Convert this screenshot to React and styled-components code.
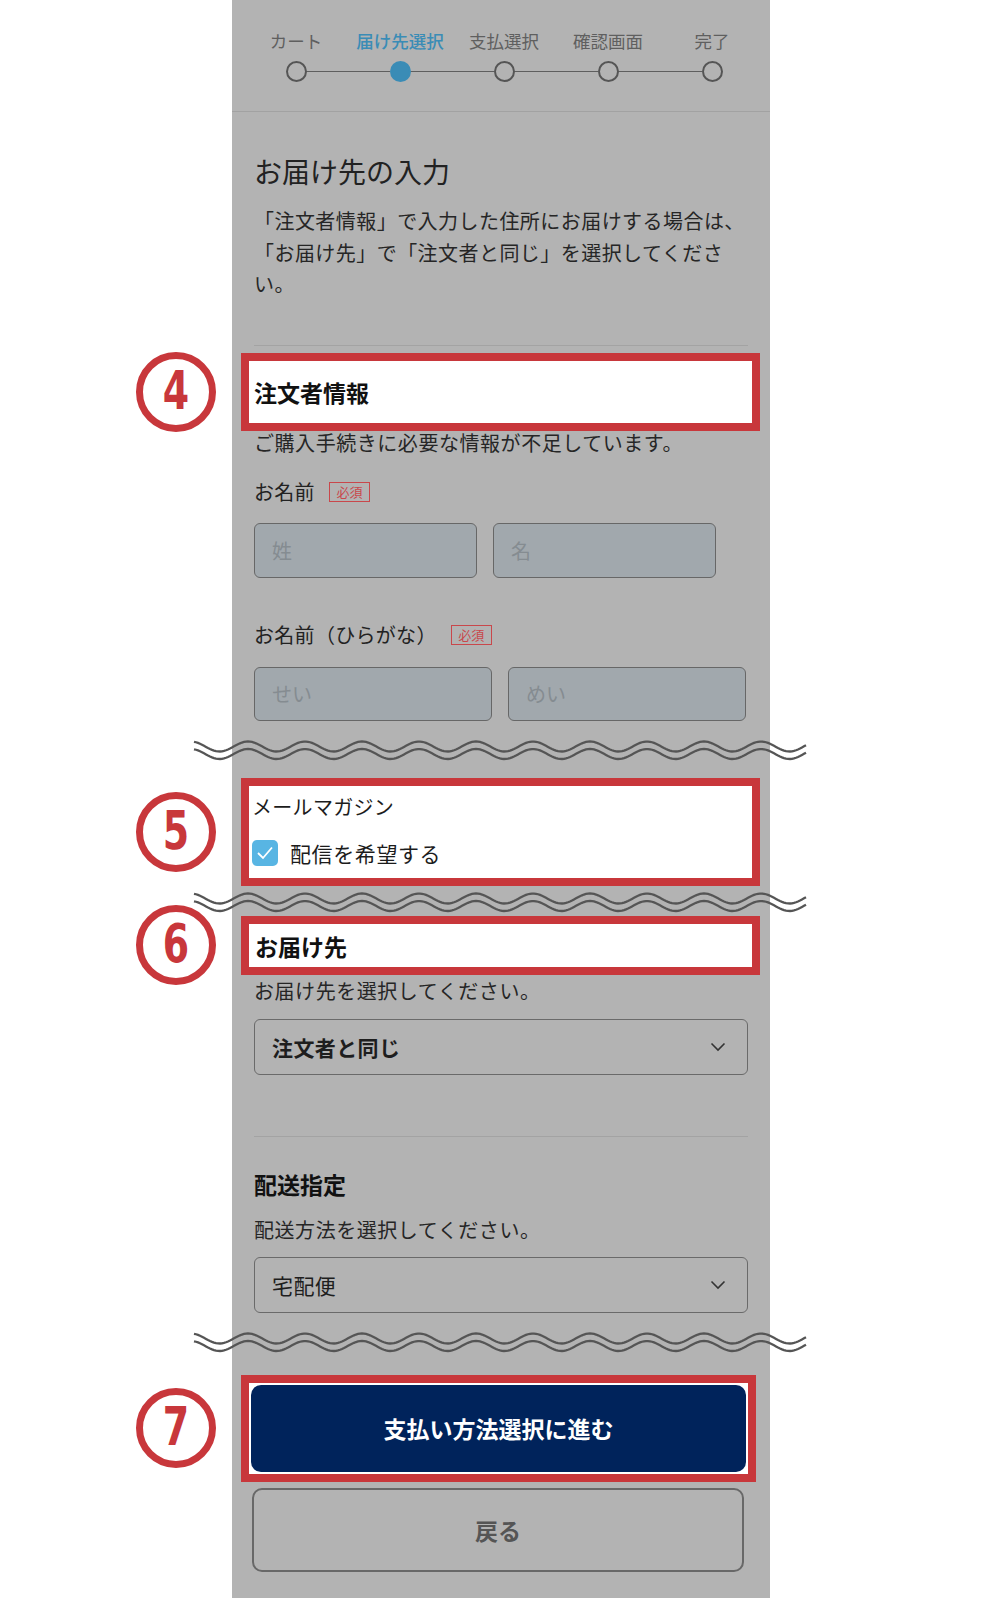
import React from "react";
import styled, { createGlobalStyle } from "styled-components";

const GlobalStyle = createGlobalStyle`
  body {
    margin: 0;
    background: #fff;
    font-family: "Noto Sans CJK JP", "Noto Sans", sans-serif;
    color: #222;
  }
  * { box-sizing: border-box; }
`;

const RED = "#c8373b";

const Page = styled.div`
  padding-left: 232px;
  padding-bottom: 2px;
`;

const Panel = styled.div`
  width: 538px;
  background: #b3b3b3;
  padding-bottom: 26px;
`;

const Stepper = styled.div`
  display: grid;
  grid-template-columns: repeat(5, 104px);
  padding: 29px 0 0 12px;
  height: 112px;
  border-bottom: 1px solid #a2a2a2;
`;

const Step = styled.div`
  position: relative;
  display: flex;
  flex-direction: column;
  align-items: center;
  gap: 8px;

  &:not(:last-child)::after {
    content: "";
    position: absolute;
    top: 41.5px;
    left: calc(50% + 10px);
    width: 84px;
    height: 1.5px;
    background: #5e5e5e;
  }
`;

const StepLabel = styled.span`
  font-size: 17.5px;
  line-height: 24px;
  color: ${({ active }) => (active ? "#3a8cb6" : "#5f5f5f")};
  font-weight: ${({ active }) => (active ? 500 : 400)};
  white-space: nowrap;
`;

const StepDot = styled.span`
  width: 21px;
  height: 21px;
  border-radius: 50%;
  border: 2px solid ${({ active }) => (active ? "#3a8cb6" : "#555")};
  background: ${({ active }) => (active ? "#3a8cb6" : "#b3b3b3")};
  position: relative;
  z-index: 1;
`;

const Body = styled.div`
  padding: 0 22px;
`;

const Title = styled.h1`
  margin: 41px 0 0;
  font-size: 28px;
  line-height: 36px;
  font-weight: 400;
  color: #222;
`;

const Lead = styled.p`
  margin: 16px 0 0;
  font-size: 20px;
  line-height: 31.5px;
  letter-spacing: 0.45px;
  color: #262626;
`;

const Divider = styled.hr`
  margin: ${({ top }) => top}px 0 0;
  border: none;
  height: 1px;
  background: #a3a3a3;
`;

const Highlight = styled.section`
  position: relative;
  margin: ${({ top }) => top}px ${({ right = 12 }) => -right}px 0 -13px;
  border: 8px solid ${RED};
  background: #fff;
  padding: ${({ pad }) => pad};
`;

const Callout = styled.span`
  position: absolute;
  left: -113px;
  top: 50%;
  transform: translateY(-50%);
  width: 80px;
  height: 80px;
  border-radius: 50%;
  border: 7px solid ${RED};
  background: #fff;
  display: flex;
  align-items: center;
  justify-content: center;
  color: ${RED};
  font-family: "DejaVu Sans Condensed", "DejaVu Sans", sans-serif;
  font-weight: 700;
  font-size: 54px;
  line-height: 1;

  span {
    display: inline-block;
    transform: scaleX(0.78);
    margin-top: -2px;
  }
`;

const SectionHeading = styled.h2`
  margin: 0;
  font-size: 23px;
  line-height: ${({ lh = 30 }) => lh}px;
  font-weight: 700;
  color: #111;
`;

const Note = styled.p`
  margin: ${({ top }) => top}px 0 0;
  font-size: 20px;
  line-height: 24px;
  letter-spacing: 0.55px;
  color: #262626;
`;

const FieldLabel = styled.div`
  margin-top: ${({ top }) => top}px;
  display: flex;
  align-items: center;
  gap: 14px;
  font-size: 20px;
  line-height: 24px;
  letter-spacing: 0.3px;
  color: #222;
`;

const Required = styled.span`
  display: inline-flex;
  align-items: center;
  justify-content: center;
  width: 41px;
  height: 20px;
  border: 1.5px solid #c9474b;
  color: #c9474b;
  font-size: 13px;
  line-height: 1;
  letter-spacing: 0;
`;

const InputRow = styled.div`
  margin-top: ${({ top }) => top}px;
  display: flex;
  gap: 16px;
`;

const TextInput = styled.div`
  width: ${({ w }) => w}px;
  height: ${({ h }) => h}px;
  border: 1.5px solid #676767;
  border-radius: 6px;
  background: #a1a8ad;
  display: flex;
  align-items: center;
  padding-left: 17px;
  font-size: 20px;
  color: #858c91;
`;

const Wave = styled.svg`
  display: block;
  margin: ${({ top }) => top}px 0 0 -60px;
  width: 612px;
  height: 24px;
  overflow: visible;
`;

const MailTitle = styled.div`
  font-size: 20px;
  line-height: 24px;
  letter-spacing: 0.3px;
  color: #1c1c1c;
`;

const CheckRow = styled.label`
  margin-top: 21px;
  display: flex;
  align-items: center;
  gap: 12px;
  font-size: 21px;
  line-height: 26px;
  letter-spacing: 0.6px;
  color: #1c1c1c;
`;

const CheckBox = styled.span`
  width: 26px;
  height: 26px;
  border-radius: 5px;
  background: #58b5e3;
  display: flex;
  align-items: center;
  justify-content: center;
`;

const Select = styled.div`
  margin-top: ${({ top }) => top}px;
  height: 56px;
  border: 1.5px solid #6a6a6a;
  border-radius: 6px;
  display: flex;
  align-items: center;
  justify-content: space-between;
  padding: 0 21px 0 17px;
  font-size: 21px;
  letter-spacing: 0.4px;
  font-weight: ${({ bold }) => (bold ? 700 : 400)};
  color: #1e1e1e;
`;

const PrimaryButton = styled.button`
  display: flex;
  width: 100%;
  height: 87px;
  align-items: center;
  justify-content: center;
  border: none;
  border-radius: 10px;
  background: #00235b;
  color: #fff;
  font-family: inherit;
  font-size: 23px;
  font-weight: 700;
`;

const BackButton = styled.button`
  display: flex;
  width: 492px;
  height: 84px;
  margin: 6px 0 0 -2px;
  align-items: center;
  justify-content: center;
  border: 2px solid #686868;
  border-radius: 10px;
  background: transparent;
  color: #555;
  font-family: inherit;
  font-size: 23px;
  font-weight: 700;
`;

const steps = ["カート", "届け先選択", "支払選択", "確認画面", "完了"];

function wavePath(offset) {
  const pts = [];
  for (let x = 0; x <= 612; x += 2) {
    const y = offset - 5 * Math.cos(((x - 54) / 57) * Math.PI * 2);
    pts.push(`${x},${y.toFixed(2)}`);
  }
  return "M" + pts.join(" L");
}

function Cut({ top }) {
  return (
    <Wave top={top} viewBox="0 0 612 24">
      <path d={wavePath(8.5)} fill="none" stroke="#555" strokeWidth="2.3" />
      <path d={wavePath(16)} fill="none" stroke="#555" strokeWidth="2.3" />
    </Wave>
  );
}

function Chevron() {
  return (
    <svg width="16" height="10" viewBox="0 0 16 10">
      <polyline points="1.5,1.5 8,8 14.5,1.5" fill="none" stroke="#333" strokeWidth="1.6" />
    </svg>
  );
}

export default function App() {
  return (
    <Page>
      <GlobalStyle />
      <Panel>
        <Stepper>
          {steps.map((s, i) => (
            <Step key={s}>
              <StepLabel active={i === 1}>{s}</StepLabel>
              <StepDot active={i === 1} />
            </Step>
          ))}
        </Stepper>

        <Body>
          <Title>お届け先の入力</Title>
          <Lead>
            「注文者情報」で入力した住所にお届けする場合は、「お届け先」で「注文者と同じ」を選択してください。
          </Lead>
          <Divider top={45} />

          <Highlight top={7} pad="16px 5px">
            <Callout><span>4</span></Callout>
            <SectionHeading>注文者情報</SectionHeading>
          </Highlight>
          <Note top={0}>ご購入手続きに必要な情報が不足しています。</Note>

          <FieldLabel top={25}>
            お名前<Required>必須</Required>
          </FieldLabel>
          <InputRow top={19}>
            <TextInput w={223} h={55}>姓</TextInput>
            <TextInput w={223} h={55}>名</TextInput>
          </InputRow>

          <FieldLabel top={45}>
            お名前（ひらがな）<Required>必須</Required>
          </FieldLabel>
          <InputRow top={20}>
            <TextInput w={238} h={54}>せい</TextInput>
            <TextInput w={238} h={54}>めい</TextInput>
          </InputRow>

          <Cut top={17} />

          <Highlight top={16} pad="9px 3px 12px">
            <Callout><span>5</span></Callout>
            <MailTitle>メールマガジン</MailTitle>
            <CheckRow>
              <CheckBox>
                <svg width="18" height="14" viewBox="0 0 18 14">
                  <polyline points="2,7 7,12 16,1.5" fill="none" stroke="#fff" strokeWidth="1.8" />
                </svg>
              </CheckBox>
              配信を希望する
            </CheckRow>
          </Highlight>

          <Cut top={4} />

          <Highlight top={2} pad="8px 6px 7px">
            <Callout><span>6</span></Callout>
            <SectionHeading lh={28}>お届け先</SectionHeading>
          </Highlight>
          <Note top={4}>お届け先を選択してください。</Note>
          <Select top={16} bold>
            注文者と同じ
            <Chevron />
          </Select>

          <Divider top={61} />
          <SectionHeading style={{ marginTop: 32 }}>配送指定</SectionHeading>
          <Note top={19}>配送方法を選択してください。</Note>
          <Select top={15}>
            宅配便
            <Chevron />
          </Select>

          <Cut top={17} />

          <Highlight top={21} right={8} pad="2px">
            <Callout><span>7</span></Callout>
            <PrimaryButton>支払い方法選択に進む</PrimaryButton>
          </Highlight>
          <BackButton>戻る</BackButton>
        </Body>
      </Panel>
    </Page>
  );
}
